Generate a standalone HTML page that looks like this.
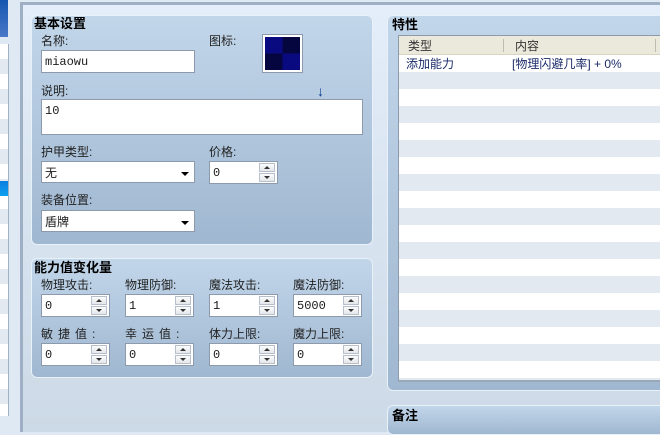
<!DOCTYPE html>
<html><head><meta charset="utf-8"><style>
*{margin:0;padding:0;box-sizing:border-box}
body{width:660px;height:416px;overflow:hidden;position:relative;background:#dfe9f4;font-family:"Liberation Sans","Noto Sans CJK SC",sans-serif;font-size:12px;color:#1a1a1a}
.a{position:absolute;line-height:14px}
.main{left:20px;top:2px;width:660px;height:430px;border-left:3px solid #9fb0c4;border-top:3px solid #9fb0c4;background:linear-gradient(#e4eefa,#ccd9e6)}
.panel{position:absolute;border-radius:6px;background:linear-gradient(#c2d6ea,#9fb7d0);border:1px solid #e8f0f8}
.t{position:absolute;font-weight:bold;font-size:13px;color:#000;line-height:14px}
.l{position:absolute;font-size:12px;color:#222;line-height:14px}
.in{position:absolute;background:#fff;border:1px solid #8d9aab;font-family:"Liberation Mono","Noto Sans CJK SC",monospace;font-size:12px;padding:4px 0 0 3px;line-height:14px}
.sp{position:absolute;width:69px;height:23px;background:#fff;border:1px solid #8d9aab;font-family:"Liberation Mono",monospace;font-size:12px;padding:4px 0 0 3px;line-height:14px}
.sp i,.sp b{position:absolute;right:2px;width:16px;height:9px;border:1px solid #b6bfcb;background:linear-gradient(#fbfbfb,#e4e7ea)}
.sp i{top:1px}.sp b{top:11px}
.sp i:after{content:"";position:absolute;left:4px;top:2px;border:3px solid transparent;border-bottom:3px solid #333;border-top:0}
.sp b:after{content:"";position:absolute;left:4px;top:2px;border:3px solid transparent;border-top:3px solid #333;border-bottom:0}
.sel:after{content:"";position:absolute;right:5px;top:10px;border:4px solid transparent;border-top:4px solid #000;border-bottom:0}
.row{position:absolute;left:0;width:270px;height:17px}
</style></head><body>
<div class="a" style="left:0;top:0;width:8px;height:37px;background:linear-gradient(#1456b0,#4a78c8)"></div>
<div class="a" style="left:0;top:44px;width:9px;height:372px;background:repeating-linear-gradient(#fff 0 15px,#e2e9f0 15px 30px);border-right:1px solid #9fb0c4"></div>
<div class="a" style="left:0;top:181px;width:8px;height:15px;background:linear-gradient(#0a7ee0,#0ea0f0)"></div>
<div class="a main"></div>

<div class="panel" style="left:31px;top:15px;width:342px;height:230px"></div>
<div class="t" style="left:34px;top:17px">基本设置</div>
<div class="l" style="left:41px;top:34px">名称:</div>
<div class="in" style="left:41px;top:50px;width:154px;height:23px">miaowu</div>
<div class="l" style="left:209px;top:34px">图标:</div>
<div class="a" style="left:262px;top:34px;width:41px;height:39px;background:#fff;border:1px solid #8d9aab;padding:2px">
<div style="width:35px;height:33px;background:conic-gradient(#050540 0 25%,#0a0a80 0 50%,#050540 0 75%,#0a0a80 0)"></div></div>
<div class="l" style="left:41px;top:84px">说明:</div>
<div class="a" style="left:317px;top:84px;font-size:14px;color:#0a3a90">↓</div>
<div class="in" style="left:41px;top:99px;width:322px;height:36px">10</div>
<div class="l" style="left:41px;top:145px">护甲类型:</div>
<div class="in sel" style="left:41px;top:161px;width:154px;height:22px;font-family:'Noto Sans CJK SC',sans-serif;font-size:12px;padding-top:3px;line-height:16px">无</div>
<div class="l" style="left:209px;top:145px">价格:</div>
<div class="sp" style="left:209px;top:161px">0<i></i><b></b></div>
<div class="l" style="left:41px;top:193px">装备位置:</div>
<div class="in sel" style="left:41px;top:210px;width:154px;height:22px;font-family:'Noto Sans CJK SC',sans-serif;font-size:12px;padding-top:3px;line-height:16px">盾牌</div>

<div class="panel" style="left:31px;top:258px;width:342px;height:120px"></div>
<div class="t" style="left:34px;top:261px">能力值变化量</div>
<div class="l" style="left:41px;top:278px">物理攻击:</div>
<div class="l" style="left:125px;top:278px">物理防御:</div>
<div class="l" style="left:209px;top:278px">魔法攻击:</div>
<div class="l" style="left:293px;top:278px">魔法防御:</div>
<div class="sp" style="left:41px;top:294px">0<i></i><b></b></div>
<div class="sp" style="left:125px;top:294px">1<i></i><b></b></div>
<div class="sp" style="left:209px;top:294px">1<i></i><b></b></div>
<div class="sp" style="left:293px;top:294px">5000<i></i><b></b></div>
<div class="l" style="left:41px;top:327px;letter-spacing:5px">敏捷值:</div>
<div class="l" style="left:125px;top:327px;letter-spacing:5px">幸运值:</div>
<div class="l" style="left:209px;top:327px">体力上限:</div>
<div class="l" style="left:293px;top:327px">魔力上限:</div>
<div class="sp" style="left:41px;top:343px">0<i></i><b></b></div>
<div class="sp" style="left:125px;top:343px">0<i></i><b></b></div>
<div class="sp" style="left:209px;top:343px">0<i></i><b></b></div>
<div class="sp" style="left:293px;top:343px">0<i></i><b></b></div>

<div class="panel" style="left:387px;top:15px;width:290px;height:376px"></div>
<div class="t" style="left:392px;top:18px">特性</div>
<div class="a" style="left:398px;top:35px;width:270px;height:347px;background:repeating-linear-gradient(#fff 0 17px,#e2e9f0 17px 34px);background-position:0 19px;border-left:1px solid #8d9aab;border-top:1px solid #8d9aab;border-bottom:2px solid #9aa8b8">
<div class="row" style="top:0;height:19px;background:#ebe8dc;border-bottom:1px solid #d8d4c4"></div>
<div class="a" style="left:9px;top:3px;color:#333">类型</div>
<div class="a" style="left:104px;top:3px;width:1px;height:13px;background:#c0bcac"></div>
<div class="a" style="left:116px;top:3px;color:#333">内容</div>
<div class="a" style="left:256px;top:3px;width:1px;height:13px;background:#c0bcac"></div>
<div class="row" style="top:19px;background:#fff"></div>
<div class="a" style="left:7px;top:21px;color:#1a2a6a">添加能力</div>
<div class="a" style="left:113px;top:21px;color:#1a2a6a;white-space:pre">[物理闪避几率] + 0%</div>
</div>
<div class="panel" style="left:387px;top:405px;width:290px;height:30px"></div>
<div class="t" style="left:392px;top:409px">备注</div>
</body></html>
